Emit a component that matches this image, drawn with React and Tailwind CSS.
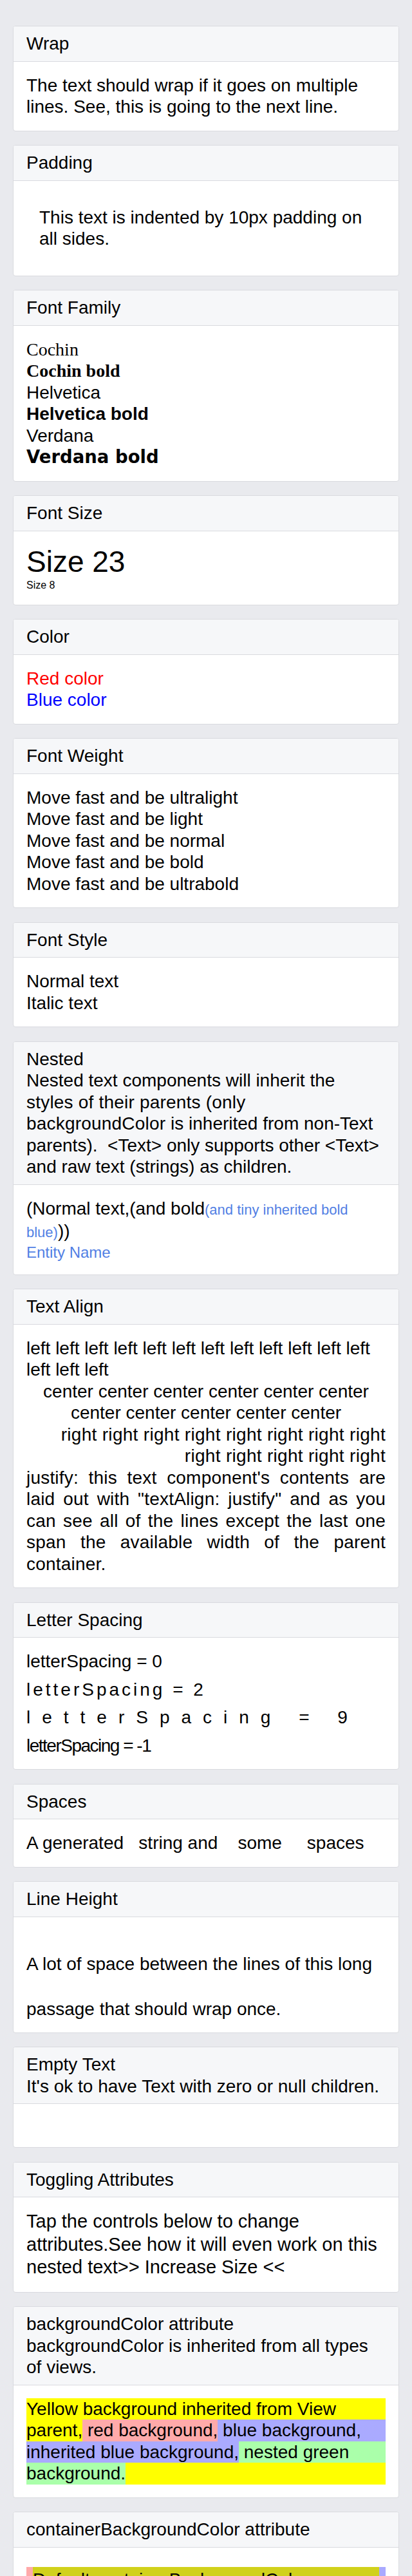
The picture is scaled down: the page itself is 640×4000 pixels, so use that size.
import React from 'react';

const BORDER = 'border-[#d9dadf]';

function Card({ title, description, bodyClassName = 'p-5', children }) {
  return (
    <div className={`overflow-hidden rounded-[4px] border ${BORDER} bg-white`}>
      <div className={`border-b ${BORDER} bg-[#f6f7f9] px-5 py-[10px]`}>
        <div>{title}</div>
        {description && <div className="whitespace-pre-wrap">{description}</div>}
      </div>
      <div className={bodyClassName}>{children}</div>
    </div>
  );
}

export default function App() {
  return (
    <div className="min-h-screen bg-[#e9eaee] px-5 pt-10 pb-10 font-['Liberation_Sans',Arial,sans-serif] text-[28px] leading-[33.5px] text-black">
      <div className="flex flex-col gap-[21.5px]">

        {/* ── WRAP ── */}
        <Card title="Wrap">
          <div>The text should wrap if it goes on multiple lines. See, this is going to the next line.</div>
        </Card>

        {/* ── PADDING ── */}
        <Card title="Padding">
          <div className="p-5">This text is indented by 10px padding on all sides.</div>
        </Card>

        {/* ── FONT FAMILY ── */}
        <Card title="Font Family">
          <div className="font-['Liberation_Serif',serif]">Cochin</div>
          <div className="font-['Liberation_Serif',serif] font-bold">Cochin bold</div>
          <div>Helvetica</div>
          <div className="font-bold">Helvetica bold</div>
          <div>Verdana</div>
          <div className="font-['DejaVu_Sans',sans-serif] text-[27.5px] font-bold">Verdana bold</div>
        </Card>

        {/* ── FONT SIZE ── */}
        <Card title="Font Size">
          <div className="text-[46px] leading-[54px]">Size 23</div>
          <div className="text-[16px] leading-[20px]">Size 8</div>
        </Card>

        {/* ── COLOR ── */}
        <Card title="Color">
          <div className="text-[#ff0000]">Red color</div>
          <div className="text-[#0000ff]">Blue color</div>
        </Card>

        {/* ── FONT WEIGHT (all render at regular weight) ── */}
        <Card title="Font Weight">
          <div>Move fast and be ultralight</div>
          <div>Move fast and be light</div>
          <div>Move fast and be normal</div>
          <div>Move fast and be bold</div>
          <div>Move fast and be ultrabold</div>
        </Card>

        {/* ── FONT STYLE ── */}
        <Card title="Font Style">
          <div>Normal text</div>
          <div>Italic text</div>
        </Card>

        {/* ── NESTED ── */}
        <Card
          title="Nested"
          description={
            <>
              Nested text components will inherit the <span className="tracking-[0.2px]">styles of their parents (only backgroundColor</span> is inherited from non-Text parents).{'  '}&lt;Text&gt; only supports other &lt;Text&gt; and raw text (strings) as children.
            </>
          }
        >
          <div>
            (Normal text,(and bold<span className="text-[22px] text-[#527fe4]">(and tiny inherited bold blue)</span>))
          </div>
          <div className="text-[24px] leading-[28px] text-[#527fe4]">Entity Name</div>
        </Card>

        {/* ── TEXT ALIGN ── */}
        <Card title="Text Align">
          <div>left left left left left left left left left left left left left left left</div>
          <div className="text-center">center center center center center center center center center center center</div>
          <div className="text-right tracking-[0.3px]">right right right right right right right right right right right right right</div>
          <div className="text-justify tracking-[0.2px]">
            justify: this text component's contents are laid out with "textAlign: justify" and as you can see all of the lines except the last one span the available width of the parent container.
          </div>
        </Card>

        {/* ── LETTER SPACING ── */}
        <Card title="Letter Spacing">
          <div className="flex flex-col gap-[10px]">
            <div>letterSpacing = 0</div>
            <div className="tracking-[4px]">letterSpacing = 2</div>
            <div className="tracking-[18px]">letterSpacing = 9</div>
            <div className="tracking-[-1.5px]">letterSpacing = -1</div>
          </div>
        </Card>

        {/* ── SPACES ── */}
        <Card title="Spaces">
          <div className="whitespace-pre">A generated   string and    some     spaces</div>
        </Card>

        {/* ── LINE HEIGHT ── */}
        <Card title="Line Height" bodyClassName="px-5 pt-[38px] pb-px">
          <div className="leading-[70px]">A lot of space between the lines of this long passage that should wrap once.</div>
        </Card>

        {/* ── EMPTY TEXT ── */}
        <Card title="Empty Text" description="It's ok to have Text with zero or null children.">
          <div className="h-[27px]" />
        </Card>

        {/* ── TOGGLING ATTRIBUTES ── */}
        <Card title="Toggling Attributes">
          <div className="text-[29px] leading-[35.5px]">
            Tap the controls below to change attributes.See how it will even work on this nested text&gt;&gt; Increase Size &lt;&lt;
          </div>
        </Card>

        {/* ── BACKGROUND COLOR (rows follow the reference wrap) ── */}
        <Card title="backgroundColor attribute" description="backgroundColor is inherited from all types of views.">
          <div className="bg-[#ffff00]">
            <div>Yellow background inherited from View</div>
            <div className="flex">
              <span>parent,</span>
              <span className="whitespace-pre bg-[#ffaaaa]"> red background,</span>
              <span className="flex-1 whitespace-pre bg-[#aaaaff]"> blue background,</span>
            </div>
            <div className="flex">
              <span className="bg-[#aaaaff]">inherited blue background,</span>
              <span className="flex-1 whitespace-pre bg-[#aaffaa]"> nested green</span>
            </div>
            <div className="flex">
              <span className="bg-[#aaffaa]">background.</span>
            </div>
          </div>
        </Card>

        {/* ── CONTAINER BACKGROUND COLOR ── */}
        <Card title="containerBackgroundColor attribute">
          <div className="bg-[linear-gradient(to_right,#ffaaaa_50%,#aaaaff_50%)] pb-[10px]">
            <div className="mx-[10px] mt-[10px] bg-[#d1d11c] pt-[3px]">
              Default containerBackgroundColor (inherited) + backgroundColor wash
            </div>
            <div className="mx-[10px] bg-[#d1d11c]">containerBackgroundColor: 'transparent' + backgroundColor wash</div>
          </div>
        </Card>

      </div>
    </div>
  );
}
